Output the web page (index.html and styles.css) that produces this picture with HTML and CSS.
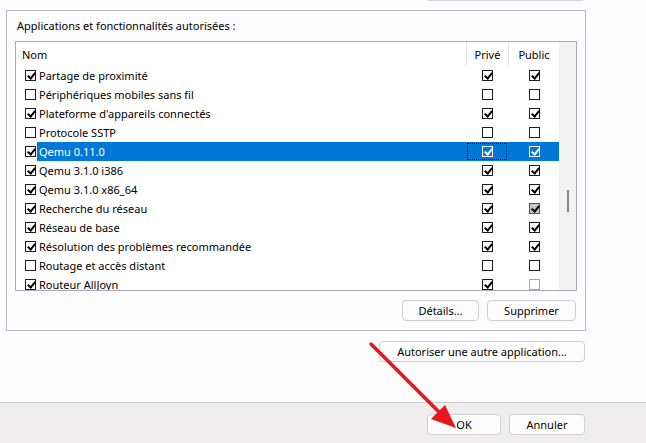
FILE: index.html
```html
<!DOCTYPE html>
<html lang="fr">
<head>
  <meta charset="UTF-8" />
  <title>Applications autorisées</title>
  <link rel="stylesheet" href="styles.css">
</head>
<body>
<div class="window">
  <div class="content">
    <div class="top-stub"></div>

    <div class="group">
      <div class="group-label">Applications et fonctionnalités autorisées :</div>

      <div class="list">
        <div class="cols">
          <div class="row head">
            <div class="hname">Nom</div>
            <div class="hcol">Privé</div>
            <div class="hcol">Public</div>
          </div>

          <div class="row">
            <div class="ncell"><span class="cb on"></span><span class="name">Partage de proximité</span></div>
            <div class="c"><span class="cb on"></span></div>
            <div class="c"><span class="cb on"></span></div>
          </div>
          <div class="row">
            <div class="ncell"><span class="cb"></span><span class="name">Périphériques mobiles sans fil</span></div>
            <div class="c"><span class="cb"></span></div>
            <div class="c"><span class="cb"></span></div>
          </div>
          <div class="row">
            <div class="ncell"><span class="cb on"></span><span class="name">Plateforme d'appareils connectés</span></div>
            <div class="c"><span class="cb on"></span></div>
            <div class="c"><span class="cb on"></span></div>
          </div>
          <div class="row">
            <div class="ncell"><span class="cb"></span><span class="name">Protocole SSTP</span></div>
            <div class="c"><span class="cb"></span></div>
            <div class="c"><span class="cb"></span></div>
          </div>
          <div class="row sel">
            <div class="ncell"><span class="cb on"></span><span class="name">Qemu 0.11.0</span></div>
            <div class="c focus"><span class="cb on"></span></div>
            <div class="c"><span class="cb on"></span></div>
          </div>
          <div class="row">
            <div class="ncell"><span class="cb on"></span><span class="name">Qemu 3.1.0 i386</span></div>
            <div class="c"><span class="cb on"></span></div>
            <div class="c"><span class="cb on"></span></div>
          </div>
          <div class="row">
            <div class="ncell"><span class="cb on"></span><span class="name">Qemu 3.1.0 x86_64</span></div>
            <div class="c"><span class="cb on"></span></div>
            <div class="c"><span class="cb on"></span></div>
          </div>
          <div class="row">
            <div class="ncell"><span class="cb on"></span><span class="name">Recherche du réseau</span></div>
            <div class="c"><span class="cb on"></span></div>
            <div class="c"><span class="cb on dim"></span></div>
          </div>
          <div class="row">
            <div class="ncell"><span class="cb on"></span><span class="name">Réseau de base</span></div>
            <div class="c"><span class="cb on"></span></div>
            <div class="c"><span class="cb on"></span></div>
          </div>
          <div class="row">
            <div class="ncell"><span class="cb on"></span><span class="name">Résolution des problèmes recommandée</span></div>
            <div class="c"><span class="cb on"></span></div>
            <div class="c"><span class="cb on"></span></div>
          </div>
          <div class="row">
            <div class="ncell"><span class="cb"></span><span class="name">Routage et accès distant</span></div>
            <div class="c"><span class="cb"></span></div>
            <div class="c"><span class="cb"></span></div>
          </div>
          <div class="row">
            <div class="ncell"><span class="cb on"></span><span class="name">Routeur AllJoyn</span></div>
            <div class="c"><span class="cb on"></span></div>
            <div class="c"><span class="cb faint"></span></div>
          </div>
        </div>
        <div class="scrollbar"><div class="thumb"></div></div>
      </div>

      <div class="list-actions">
        <button class="btn details">Détails...</button>
        <button class="btn remove">Supprimer</button>
      </div>
    </div>

    <div class="add-row">
      <button class="btn add">Autoriser une autre application...</button>
    </div>
  </div>

  <div class="footer">
    <button class="btn ok">OK</button>
    <button class="btn cancel">Annuler</button>
  </div>

  <!-- red annotation arrow pointing at OK -->
  <svg class="arrow" width="646" height="443" viewBox="0 0 646 443">
    <line x1="371" y1="344" x2="441" y2="414" stroke="#e8161b" stroke-width="3.5" stroke-linecap="round"/>
    <polygon points="456,428 431,419 445,405" fill="#e8161b"/>
  </svg>
</div>
</body>
</html>
```

FILE: styles.css
```css
* { box-sizing: border-box; }
body { margin: 0; font-family: "Noto Sans", "Open Sans", sans-serif; font-size: 11px; color: #000; background: #fdfcfe; }

.window { position: relative; width: 646px; height: 443px; overflow: hidden; display: flex; flex-direction: column; }
.content { height: 402px; flex: none; background: #fdfcfe; }
.top-stub { margin-left: 428px; width: 155px; height: 1px; background: #d6d5dc; }

/* group box */
.group { margin: 9px 0 0 6px; width: 580px; border: 1px solid #b7b4c7; padding: 7px 8px 9px 8px; }
.group-label { height: 16px; line-height: 16px; padding-left: 2px; margin-bottom: 7px; }

/* list view */
.list { display: flex; height: 250px; border: 1px solid #aaa8b8; background: #fff; }
.cols { flex: 1; overflow: hidden; }
.row { display: grid; grid-template-columns: 450px 42px 51px; height: 19px; align-items: center; }
.row.head { height: 24px; align-items: stretch; }
.hname { display: flex; align-items: center; padding-left: 6px; }
.hcol { display: flex; align-items: center; justify-content: center; border-left: 1px solid #e5e5e5; }
.ncell { display: flex; align-items: center; height: 100%; padding-left: 9px; }
.name { flex: 1; height: 100%; display: flex; align-items: center; margin-left: 1px; padding-left: 2px; white-space: nowrap; }
.c { height: 100%; display: flex; align-items: center; justify-content: center; }
.c + .c { padding-left: 2px; }
.row.sel .name, .row.sel .c { background: #0078d7; color: #fff; }
.focus { outline: 1px dotted #000; outline-offset: -2px; }

.scrollbar { width: 17px; flex: none; background: #f2f2f2; }
.thumb { width: 2px; height: 22px; margin: 148px auto 0; background: #858585; }

/* checkboxes */
.cb { position: relative; flex: none; width: 11px; height: 11px; border: 1px solid #1c1c1c; background: #fff; }
.cb.on::after { content: ""; position: absolute; left: 3px; top: 0; width: 3px; height: 6px; border: solid #000; border-width: 0 2px 2px 0; transform: rotate(40deg); }
.sel .c .cb { background: transparent; border-color: #fff; }
.sel .c .cb.on::after { border-color: #fff; }
.cb.dim { background: #c6c6c6; border-color: #555; }
.cb.faint { border-color: #a5a5a5; }

/* buttons */
.btn { height: 21px; padding: 0; border: 1px solid #d0d0d0; border-radius: 4px; background: #fdfdfd; font: inherit; color: #000; }
.list-actions { display: flex; justify-content: flex-end; gap: 8px; margin: 9px 1px 0 0; }
.details { width: 77px; }
.remove { width: 89px; }
.add-row { display: flex; justify-content: flex-end; padding-right: 61px; margin-top: 10px; }
.add { width: 206px; }

.footer { flex: 1; display: flex; justify-content: flex-end; align-items: flex-start; gap: 8px; padding: 11px 61px 0 0; border-top: 1px solid #c9c7c9; background: #efeded; }
.ok { width: 74px; }
.cancel { width: 76px; }

.arrow { position: absolute; left: 0; top: 0; pointer-events: none; }
```
